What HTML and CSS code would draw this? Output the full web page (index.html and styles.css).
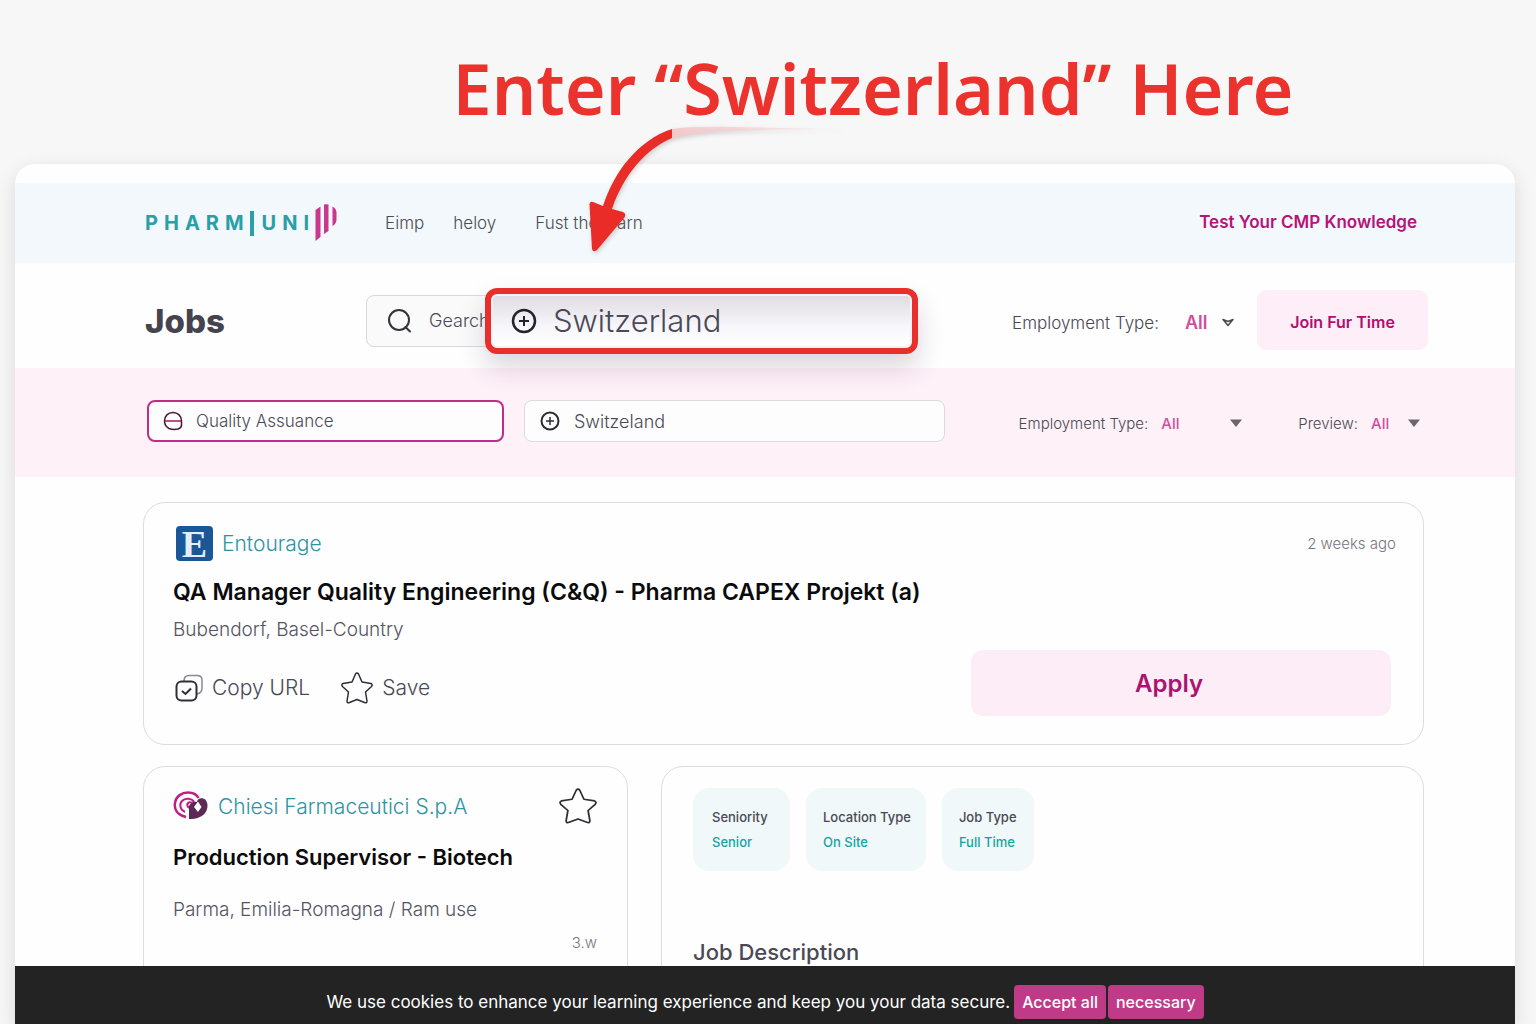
FILE: index.html
```html
<!DOCTYPE html>
<html lang="en">
<head>
    <meta charset="UTF-8">
    <meta name="viewport" content="width=device-width, initial-scale=1.0">
    <title>Jobs - Pharmuni</title>
    <link rel="stylesheet" href="styles.css">
</head>
<body>
    <!-- Callout above the page -->
    <div class="callout">
        <p class="callout-text">Enter “Switzerland” Here</p>
        <svg class="callout-arrow" width="280" height="140" viewBox="580 120 280 140" aria-hidden="true">
            <defs>
                <linearGradient id="tailFade" x1="0" x2="1" y1="0" y2="0">
                    <stop offset="0" stop-color="#f2c9cb"/>
                    <stop offset="1" stop-color="#f7dcdd" stop-opacity="0.3"/>
                </linearGradient>
            </defs>
            <path d="M672 129 Q692 126 735 127 L855 129.500 Q705 128 672 138 Z" fill="url(#tailFade)"/>
            <path d="M603 206 C614 172 638 140 672 129 L672 138 C646 149 624 174 612 209 L623 212 Q627 214 624 218 L597 250 Q593 253 592 249 L589.500 204 Q590 201 593 202 Z" fill="#e92c28"/>
        </svg>
    </div>

    <div class="page">
        <header class="navbar">
            <a class="logo" href="#" aria-label="Pharmuni">
                <span>PHARM</span><span class="logo-bar"></span><span>UNI</span>
                <svg width="22" height="38" viewBox="0 0 22 38" aria-hidden="true">
                    <path d="M0.500 6 L5.500 2.500 V33 L0.500 37 Z M9 0.500 Q11 -0.200 13.500 0.500 V27 L9 30 Z M17.500 2.500 Q22 5 21.500 10 V16 Q21 20 17.500 22 Z" fill="#c9388f"/>
                </svg>
            </a>
            <nav class="nav-links">
                <a href="#">Eimp</a>
                <a href="#">heloy</a>
                <a href="#">Fust the learn</a>
            </nav>
            <a class="test-link" href="#">Test Your CMP Knowledge</a>
        </header>

        <section class="toolbar">
            <h1>Jobs</h1>
            <div class="search-area">
                <label class="search-box">
                    <svg width="26" height="26" viewBox="0 0 26 26" fill="none" stroke="#34333c" stroke-width="2" aria-hidden="true">
                        <circle cx="12" cy="12" r="10"/>
                        <path d="M18.500 19 L23 23.500" stroke-linecap="round"/>
                    </svg>
                    <input type="text" value="Gearch" aria-label="Search">
                </label>
                <label class="location-highlight">
                    <svg width="26" height="26" viewBox="0 0 26 26" fill="none" stroke="#24232c" aria-hidden="true">
                        <circle cx="13" cy="13" r="11" stroke-width="2.500"/>
                        <path d="M8 13 H18 M13 8 V18" stroke-width="2"/>
                    </svg>
                    <input type="text" value="Switzerland" aria-label="Location">
                </label>
            </div>
            <div class="toolbar-type">
                <label for="type">Employment Type:</label>
                <span class="select">
                    <select id="type"><option>All</option></select>
                    <svg width="12" height="9" viewBox="0 0 12 9" fill="none" stroke="#4a4850" stroke-width="1.500" stroke-linejoin="round" aria-hidden="true"><path d="M1 1.500 L6 3.500 L11 1.500 L6 7.500 Z"/></svg>
                </span>
            </div>
            <button class="join-btn">Join Fur Time</button>
        </section>

        <section class="filters">
            <label class="filter-box active">
                <svg width="20" height="20" viewBox="0 0 20 20" fill="none" stroke="#4a1834" stroke-width="1.500" aria-hidden="true">
                    <path d="M10 1.500 C15 1.500 18.500 5 18.500 10 V14 Q18.500 17 15 18 Q10 19 6 17.500 Q1.500 15 1.500 10 C1.500 5 5 1.500 10 1.500 Z"/>
                    <path d="M2 10 H18" stroke="#a3175f"/>
                </svg>
                <input type="text" value="Quality Assuance" aria-label="Keyword">
            </label>
            <label class="filter-box place">
                <svg width="20" height="20" viewBox="0 0 20 20" fill="none" stroke="#2d2c34" stroke-width="2" aria-hidden="true">
                    <circle cx="10" cy="10" r="8.500"/>
                    <path d="M6 10 H14 M10 6 V14" stroke-width="1.500"/>
                </svg>
                <input type="text" value="Switzeland" aria-label="Place">
            </label>
            <div class="filter-select">
                <label for="type2">Employment Type:</label>
                <span class="select wide">
                    <select id="type2"><option>All</option></select>
                    <svg width="12" height="8" viewBox="0 0 12 8" aria-hidden="true"><path d="M0 0.500 H12 L6 8 Z" fill="#6d656d"/></svg>
                </span>
            </div>
            <div class="filter-select">
                <label for="preview">Preview:</label>
                <span class="select">
                    <select id="preview"><option>All</option></select>
                    <svg width="12" height="8" viewBox="0 0 12 8" aria-hidden="true"><path d="M0 0.500 H12 L6 8 Z" fill="#6d656d"/></svg>
                </span>
            </div>
        </section>

        <main class="jobs">
            <article class="card featured">
                <div class="card-top">
                    <span class="badge-e">E</span>
                    <a class="company" href="#">Entourage</a>
                    <span class="posted">2 weeks ago</span>
                </div>
                <h2>QA Manager Quality Engineering (C&amp;Q) - Pharma CAPEX Projekt (a)</h2>
                <p class="location">Bubendorf, Basel-Country</p>
                <div class="card-actions">
                    <button class="text-btn">
                        <svg width="28" height="28" viewBox="0 0 28 28" fill="none" stroke-width="2" stroke="#2f2e38" aria-hidden="true">
                            <path d="M9 7 Q9 1.500 14 1.500 H22 Q27 1.500 27 6 V14 Q27 19 22 20" stroke="#8a8992" stroke-width="1.500"/>
                            <rect x="1.500" y="7.500" width="20" height="19" rx="5"/>
                            <path d="M7 17 L10.500 20 L16 14.500"/>
                        </svg>
                        Copy URL
                    </button>
                    <button class="text-btn">
                        <svg width="32" height="32" viewBox="0 0 32 32" fill="none" stroke="#2f2e38" stroke-width="1.500" stroke-linejoin="round" aria-hidden="true">
                            <path d="M14.500 2 Q16 0 17.500 2 L21 10 L30 11.500 Q32 12.500 30.500 14.500 L24.500 20 L26 29 Q26 31.500 23.500 30.500 L16 27.500 L8.500 30.500 Q6 31.500 6 29 L7.500 20 L1.500 14.500 Q0 12.500 2 11.500 L11 10 Z"/>
                        </svg>
                        Save
                    </button>
                    <button class="apply-btn">Apply</button>
                </div>
            </article>

            <div class="job-columns">
                <article class="card job">
                    <div class="card-top">
                        <svg width="36" height="30" viewBox="0 0 36 30" fill="none" aria-hidden="true">
                            <path d="M13 26 C4 24 1 18 2 12 C3 5 9 1.500 15 1.500 C20 1.500 24 4 25.500 7" stroke="#c01f81" stroke-width="2.500"/>
                            <path d="M12 21 C7 19 6 13 9 10 C12 6.500 19 7 21 11" stroke="#c01f81" stroke-width="2"/>
                            <path d="M16 17 C12 13 16 10 19 12" stroke="#c01f81" stroke-width="2"/>
                            <path d="M24 11 C24 6 34 5 34.500 14 C35 23 26 29 16 28 V15 C18 11 21 10 24 11 Z" fill="#5a2a55"/>
                            <path d="M25 10.500 L28.500 16 L25 21 L21 16 Z" fill="#fff"/>
                        </svg>
                        <a class="company" href="#">Chiesi Farmaceutici S.p.A</a>
                        <button class="star-btn" aria-label="Save job">
                            <svg width="38" height="36" viewBox="0 0 32 32" preserveAspectRatio="none" fill="none" stroke="#2f2e38" stroke-width="1.500" stroke-linejoin="round" aria-hidden="true">
                                <path d="M14.500 2 Q16 0 17.500 2 L21 10 L30 11.500 Q32 12.500 30.500 14.500 L24.500 20 L26 29 Q26 31.500 23.500 30.500 L16 27.500 L8.500 30.500 Q6 31.500 6 29 L7.500 20 L1.500 14.500 Q0 12.500 2 11.500 L11 10 Z"/>
                            </svg>
                        </button>
                    </div>
                    <h2>Production Supervisor - Biotech</h2>
                    <p class="location">Parma, Emilia-Romagna / Ram use</p>
                    <p class="posted">3.w</p>
                </article>

                <article class="card details">
                    <dl class="tags">
                        <div class="tag"><dt>Seniority</dt><dd>Senior</dd></div>
                        <div class="tag"><dt>Location Type</dt><dd>On Site</dd></div>
                        <div class="tag"><dt>Job Type</dt><dd>Full Time</dd></div>
                    </dl>
                    <h3>Job Description</h3>
                </article>
            </div>
        </main>

        <footer class="cookies">
            <p>We use cookies to enhance your learning experience and keep you your data secure.</p>
            <button class="cookie-btn">Accept all</button>
            <button class="cookie-btn">necessary</button>
        </footer>
    </div>
</body>
</html>
```
FILE: styles.css
```css
* {
    box-sizing: border-box;
    margin: 0;
    padding: 0;
}
body {
    font-family: Inter, "Open Sans", sans-serif;
    background-color: #f7f7f7;
    color: #4a4955;
    height: 100vh;
    display: flex;
    flex-direction: column;
    overflow: hidden;
}
a {
    text-decoration: none;
    color: inherit;
}
button,
input,
select {
    font: inherit;
    color: inherit;
    border: none;
    background: none;
    outline: none;
}
button {
    cursor: pointer;
}
svg {
    flex-shrink: 0;
}

/* Callout */
.callout {
    position: relative;
    z-index: 2;
    padding: 48px 0 36px 210px;
    text-align: center;
}
.callout-text {
    font-family: "Noto Sans", "Open Sans", sans-serif;
    font-size: 70px;
    line-height: 80px;
    font-weight: 600;
    color: #ec322d;
    white-space: nowrap;
}
.callout-arrow {
    position: absolute;
    left: 580px;
    top: 120px;
    filter: drop-shadow(1px 2px 2px rgba(60, 20, 30, 0.2));
}

/* Page frame */
.page {
    flex: 1;
    min-height: 0;
    margin: 0 21px 0 15px;
    padding-top: 19px;
    background: #fefefe;
    border-radius: 20px 20px 0 0;
    box-shadow: 0 6px 20px rgba(0, 0, 0, 0.12);
    display: flex;
    flex-direction: column;
}
.navbar,
.toolbar,
.filters {
    display: flex;
    align-items: center;
    flex-shrink: 0;
    padding: 0 87px 0 130px;
}
.navbar {
    height: 80px;
    padding-right: 98px;
    background: #f2f8fb;
}
.logo {
    display: flex;
    align-items: center;
    color: #2b9ea8;
    font-size: 20px;
    font-weight: 700;
    letter-spacing: 6px;
}
.logo-bar {
    width: 4px;
    height: 25px;
    margin-right: 8px;
    background: #2b9ea8;
}
.nav-links {
    display: flex;
    margin-left: 48px;
    font-size: 17px;
    font-weight: 300;
    color: #4b4d56;
}
.nav-links a {
    margin-right: 29px;
}
.nav-links a:last-child {
    margin-left: 10px;
}
.test-link {
    margin-left: auto;
    padding-bottom: 3px;
    font-size: 17px;
    font-weight: 600;
    color: #b6137a;
}

/* Title and search */
.toolbar {
    height: 105px;
}
.toolbar h1 {
    width: 221px;
    padding-top: 10px;
    font-size: 33px;
    font-weight: 800;
    color: #45444e;
}
.search-area {
    display: flex;
    align-items: center;
    flex: 1;
    max-width: 552px;
    margin-top: 10px;
}
.search-box {
    display: flex;
    align-items: center;
    flex-shrink: 0;
    gap: 16px;
    width: 136px;
    height: 52px;
    padding-left: 20px;
    border: 1px solid #d9d9dc;
    border-radius: 8px;
    background: #fafafa;
    font-size: 18px;
    font-weight: 300;
}
.search-box input {
    width: 70px;
}
.location-highlight {
    position: relative;
    display: flex;
    align-items: center;
    flex: 1;
    min-width: 0;
    gap: 16px;
    height: 66px;
    margin-left: -17px;
    padding-left: 20px;
    border: 6px solid #e92f2b;
    border-radius: 12px;
    background: linear-gradient(#dedae1, #f7f6fa 60%, #fff);
    box-shadow: 0 14px 26px rgba(70, 40, 80, 0.18), inset 0 0 0 2px #f3f1f5;
    font-size: 31px;
    font-weight: 300;
}
.location-highlight input {
    flex: 1;
    min-width: 0;
}
.toolbar-type {
    display: flex;
    align-items: center;
    gap: 26px;
    margin: 14px 23px 0 auto;
    font-size: 17px;
    font-weight: 300;
}
.select {
    position: relative;
    display: flex;
    align-items: center;
    color: #cf4f9c;
    font-weight: 500;
}
.select select {
    appearance: none;
    width: 49px;
}
.select svg {
    position: absolute;
    right: 0;
    pointer-events: none;
}
.toolbar-type .select {
    font-size: 18px;
    font-weight: 600;
}
.join-btn {
    width: 171px;
    height: 60px;
    margin-top: 9px;
    padding-top: 3px;
    border-radius: 9px;
    background: #fdeef7;
    font-size: 16px;
    font-weight: 600;
    color: #b00e70;
}

/* Filters */
.filters {
    height: 109px;
    padding: 0 95px 3px 132px;
    background: #fef1f8;
    font-size: 15px;
    font-weight: 300;
}
.filter-box {
    display: flex;
    align-items: center;
    gap: 14px;
    height: 42px;
    padding-left: 15px;
    border: 1px solid #dcdae0;
    border-radius: 8px;
    background: #fefdfe;
    font-size: 17px;
}
.filter-box.active {
    width: 357px;
    margin-right: 20px;
    padding-left: 14px;
    border: 2px solid #c02c86;
    gap: 13px;
}
.filter-box.place {
    width: 421px;
    margin-right: auto;
    font-size: 18px;
}
.filter-box input {
    flex: 1;
    min-width: 0;
}
.filter-select {
    display: flex;
    align-items: center;
    gap: 13px;
    margin: 4px 0 0 56px;
}
.select.wide select {
    width: 81px;
}

/* Job cards */
.jobs {
    flex: 1;
    min-height: 0;
    overflow: hidden;
    padding: 25px 91px 0 128px;
}
.card {
    border: 1px solid #dddce3;
    border-radius: 22px;
    background: #fefefe;
}
.card-top {
    display: flex;
    align-items: center;
}
.card h2 {
    font-size: 22px;
    line-height: 28px;
    font-weight: 600;
    color: #0b0b0d;
}
.company {
    font-size: 21px;
    font-weight: 300;
    color: #2f93a3;
}
.location {
    font-size: 19px;
    line-height: 24px;
    font-weight: 300;
    color: #555463;
}
.posted {
    margin-left: auto;
    font-size: 15px;
    font-weight: 300;
    color: #76757e;
}
.featured {
    height: 243px;
    padding: 22px 32px 0 29px;
}
.featured .card-top {
    height: 36px;
    padding-left: 3px;
    gap: 9px;
}
.featured .posted {
    margin-right: -5px;
}
.badge-e {
    width: 37px;
    height: 35px;
    border-radius: 4px;
    background: #1b5797;
    color: #e4eefb;
    font-family: "Liberation Serif", serif;
    font-size: 38px;
    line-height: 36px;
    font-weight: 700;
    text-align: center;
}
.featured h2 {
    margin-top: 17px;
    font-size: 23px;
}
.featured .location {
    margin-top: 12px;
}
.card-actions {
    display: flex;
    align-items: center;
    gap: 31px;
    margin-top: 8px;
}
.text-btn {
    display: flex;
    align-items: center;
    gap: 9px;
    margin-top: 9px;
    font-size: 21px;
    font-weight: 300;
}
.text-btn:first-child {
    padding-left: 2px;
}
.apply-btn {
    width: 420px;
    height: 66px;
    margin-left: auto;
    padding-right: 24px;
    border-radius: 12px;
    background: #fdedf6;
    font-size: 24px;
    font-weight: 600;
    color: #ab1272;
}
.job-columns {
    display: flex;
    gap: 33px;
    margin-top: 21px;
}
.job {
    width: 485px;
    height: 300px;
    padding: 21px 30px 0 29px;
}
.job .card-top {
    gap: 9px;
}
.star-btn {
    display: flex;
    margin-left: auto;
}
.job h2 {
    margin-top: 19px;
}
.job .location {
    margin-top: 27px;
}
.job .posted {
    margin-top: 11px;
    text-align: right;
}
.details {
    flex: 1;
    height: 300px;
    padding: 21px 31px 0;
}
.tags {
    display: flex;
    gap: 16px;
}
.tag {
    min-width: 92px;
    height: 83px;
    padding: 18px 15px 0 17px;
    border-radius: 16px;
    background: #f0f8fa;
    font-size: 13px;
    line-height: 22px;
    font-weight: 500;
}
.tag:first-child {
    min-width: 97px;
    padding-left: 19px;
}
.tag dd {
    margin-top: 3px;
    color: #17a3a3;
}
.details h3 {
    margin-top: 67px;
    font-size: 22px;
    line-height: 28px;
    font-weight: 500;
}

/* Cookie bar */
.cookies {
    display: flex;
    align-items: center;
    justify-content: center;
    flex-shrink: 0;
    gap: 2px;
    height: 58px;
    padding-top: 14px;
    background: #232324;
    color: #fff;
    font-size: 17px;
}
.cookies p {
    margin-right: 2px;
}
.cookie-btn {
    height: 34px;
    padding: 0 8px;
    border-radius: 4px;
    background: #bf3b88;
    font-size: 16px;
    font-weight: 500;
}
```
